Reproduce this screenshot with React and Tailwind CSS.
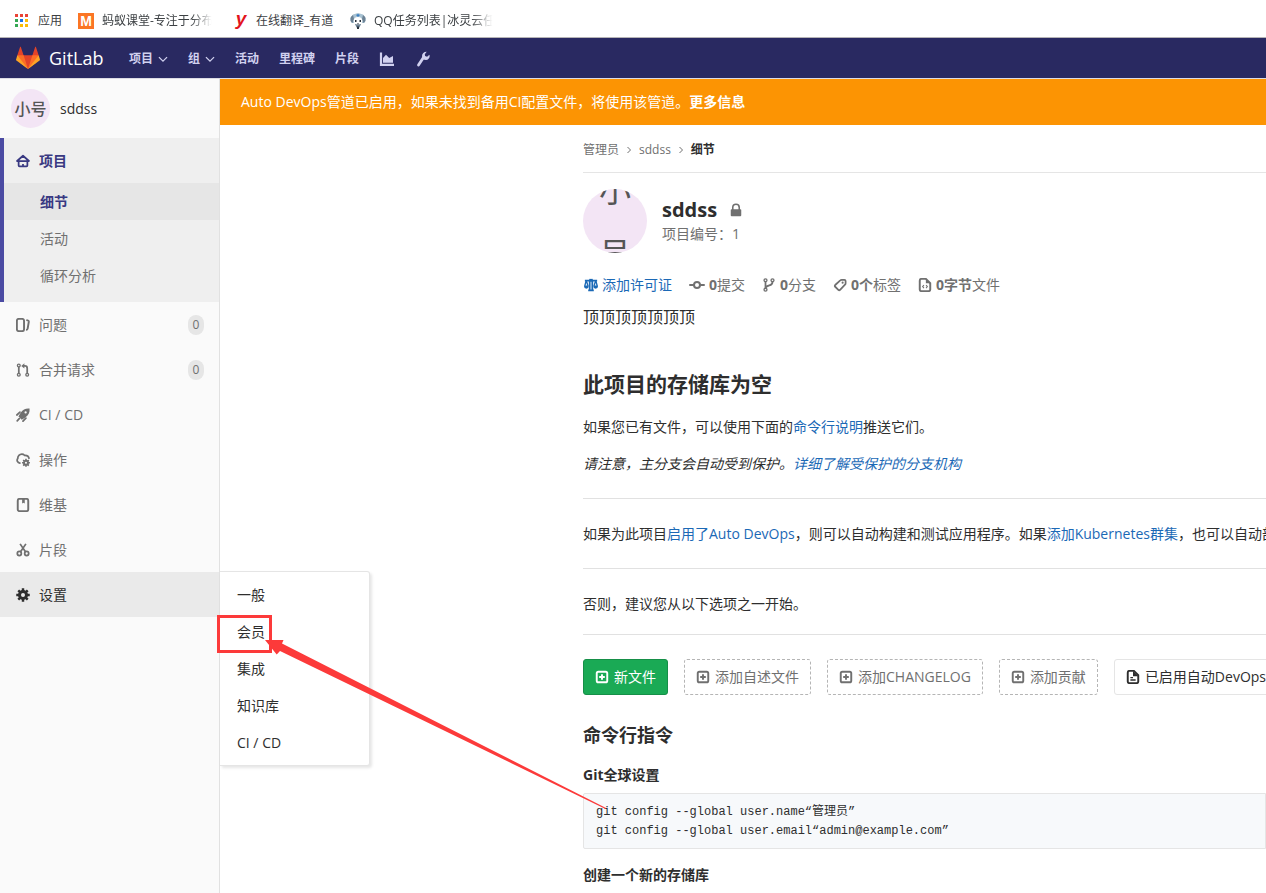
import React from "react";

function Icon({ size = "size-3.5", children, className = "" }) {
  return (
    <svg viewBox="0 0 16 16" aria-hidden="true" className={`${size} shrink-0 ${className}`} fill="none" stroke="currentColor" strokeWidth="2">
      {children}
    </svg>
  );
}

const HomeIcon = () => (
  <Icon>
    <path d="M1.2 8 8 2l6.800 6z" strokeLinejoin="round" />
    <path d="M3 8v5.200q0 1 1 1h8q1 0 1-1V8M8 14v-2.600" />
  </Icon>
);

const IssuesIcon = () => (
  <Icon>
    <rect x="1" y="1" width="8.200" height="14" rx="2.200" strokeWidth="2.200" />
    <path d="M11.800 2.400l1.600.3q1.400.3 1.200 1.800l-1.300 7.600q-.3 1.600-1.900 1.500" strokeWidth="2.200" />
  </Icon>
);

const MergeIcon = () => (
  <Icon>
    <circle cx="3.200" cy="2.800" r="1.600" strokeWidth="1.500" />
    <circle cx="3.200" cy="13.400" r="1.600" strokeWidth="1.500" />
    <circle cx="12.800" cy="13.400" r="1.600" strokeWidth="1.500" />
    <path d="M3.200 4.500v7.200M12.800 11.700V6q0-2.600-2.600-2.600H8.600" />
    <path d="M9.600.4v6L6 3.400z" fill="currentColor" stroke="none" />
  </Icon>
);

const RocketIcon = () => (
  <Icon>
    <path
      d="M15.500.6C11 .2 8 1.600 5.500 5.200l-.9 1.400L2.800 9.700l3.800 3.800 3.200-2.100 1.100-.8C14.500 8 15.900 5 15.500.6zM11 6.300a1.300 1.300 0 1 1 0-2.600 1.300 1.300 0 0 1 0 2.600z"
      fill="currentColor"
      stroke="none"
      fillRule="evenodd"
    />
    <path d="M1 8 4.500 4.800M3.700 12.200 1.400 14.600M8 15l3.300-3.400" strokeLinecap="round" />
  </Icon>
);

const CloudGearIcon = () => (
  <Icon>
    <path d="M5.200 11.600h-.8A3.400 3.400 0 0 1 2 6.200C2 3.600 4 1.300 6.700 1.300q1.800 0 3 1.300 4.800-.3 5.300 4" />
    <path d="M11.400 6.700v9M6.900 11.200h9M8.200 8l6.400 6.400M14.600 8l-6.400 6.400" strokeWidth="1.800" />
    <circle cx="11.400" cy="11.200" r="2.300" strokeWidth="2.200" />
    <circle cx="11.400" cy="11.200" r="1.200" fill="#fafafa" stroke="none" />
  </Icon>
);

const BookIcon = () => (
  <Icon>
    <rect x="2" y="1" width="12" height="14" rx="2" strokeWidth="2.200" />
    <path d="M7 1v5.400l1.500-1 1.500 1V1z" fill="currentColor" stroke="none" />
  </Icon>
);

const ScissorsIcon = () => (
  <Icon>
    <circle cx="3.800" cy="12" r="2.300" />
    <circle cx="12.200" cy="12" r="2.300" />
    <path d="M4.700 1 11 10.400M11.300 1 5 10.400" />
  </Icon>
);

const GearIcon = () => (
  <Icon>
    <path d="M8 .3v15.400M.3 8h15.400M2.600 2.600l10.800 10.800M13.400 2.600 2.600 13.400" strokeWidth="2.800" />
    <circle cx="8" cy="8" r="4" strokeWidth="3.400" />
    <circle cx="8" cy="8" r="2.300" fill="#eaeaea" stroke="none" />
  </Icon>
);

const ChevronDown = () => (
  <Icon size="size-2.5">
    <path d="M1.500 5 8 11.500 14.500 5" />
  </Icon>
);

const ChartIcon = () => (
  <Icon size="size-4">
    <path d="M2 1.500v12.300h13" strokeWidth="2.200" />
    <path d="M4 11.700V7l3-3.300 3.200 3.300 3.800-2v6.700z" fill="currentColor" stroke="none" />
  </Icon>
);

const WrenchIcon = () => (
  <Icon size="size-4">
    <path d="M3.500 14 8.300 6.800" strokeWidth="2.800" strokeLinecap="round" />
    <path d="M11.700.8Q7.200 1 7 4.900q.2 4 4 4.100 3.300-.3 3.700-4l-.3-1.300-2.300 2.100-2-.8-.3-1.800z" fill="currentColor" stroke="none" />
  </Icon>
);

const CommitIcon = () => (
  <Icon size="size-4">
    <circle cx="8" cy="8" r="3" />
    <path d="M1 8h4M11 8h4" strokeLinecap="round" />
  </Icon>
);

const BranchIcon = () => (
  <Icon>
    <circle cx="4" cy="2.600" r="1.700" strokeWidth="1.500" />
    <circle cx="4" cy="13.400" r="1.700" strokeWidth="1.500" />
    <circle cx="12" cy="2.600" r="1.700" strokeWidth="1.500" />
    <path d="M4 4.500v7.200M12 4.500q0 3-3.600 3.900Q4.600 9.300 4 11.600" />
  </Icon>
);

const LabelIcon = () => (
  <Icon>
    <path d="M8.300 2.700q.7-.7 1.700-.7h3q1.400 0 1.400 1.400V6q0 1-.7 1.700l-5.600 5.800q-1 1-2 0L2.500 10q-1-1 0-2z" />
    <circle cx="11" cy="5.300" r="1.200" fill="currentColor" stroke="none" />
  </Icon>
);

const DocCodeIcon = () => (
  <Icon>
    <path d="M4 1h5l5 5v7q0 2-2 2H4q-2 0-2-2V3q0-2 2-2z" strokeWidth="2.200" />
    <path d="M9 1v5h5z" fill="currentColor" stroke="none" />
    <path d="M6.800 8 5.300 9.800l1.500 1.800M9.200 8l1.500 1.800-1.500 1.800" strokeWidth="1.200" />
  </Icon>
);

const DocTextIcon = () => (
  <Icon>
    <path d="M4 1h5l5 5v7q0 2-2 2H4q-2 0-2-2V3q0-2 2-2z" strokeWidth="2.200" />
    <path d="M8 1v6h6z" fill="currentColor" stroke="none" />
    <path d="M5 8.700h3M5 11.500h6" strokeWidth="1.600" />
  </Icon>
);

const PlusSquare = () => (
  <Icon>
    <rect x="2" y="2" width="12" height="12" rx="1.800" strokeWidth="2.200" />
    <path d="M8 4.800v6.400M4.800 8h6.400" strokeWidth="2.200" />
  </Icon>
);

const ScaleIcon = () => (
  <Icon>
    <path d="M1 3h14M6.500 3v11M9.500 3v11M4.800 14.200h6.400" />
    <path d="M6 1h4v3H6z" fill="currentColor" stroke="none" />
    <path d="M0 8.500h5.400v1q0 2.700-2.700 2.700T0 9.500zM10.600 8.500H16v1q0 2.700-2.700 2.700t-2.700-2.700z" fill="currentColor" stroke="none" />
    <path d="M2.500 3 .9 9M2.700 3l1.800 6M13.300 3l-1.800 6M13.500 3l1.600 6" strokeWidth="1.600" />
  </Icon>
);

const LockIcon = () => (
  <Icon className="text-[#707070]">
    <rect x="2" y="7" width="12" height="8" rx="1" fill="currentColor" stroke="none" />
    <path d="M4.300 8V5.200q0-3.700 3.700-3.700t3.700 3.700V8" strokeWidth="1.800" />
  </Icon>
);

const Tanuki = () => (
  <svg viewBox="0 0 36 36" className="size-6 shrink-0" aria-hidden="true">
    <path fill="#e24329" d="M2 14l9.380 9v-9l-4-12.280c-.205-.632-1.176-.632-1.380 0z" />
    <path fill="#e24329" d="M34 14l-9.380 9v-9l4-12.280c.205-.632 1.176-.632 1.380 0z" />
    <path fill="#e24329" d="M18 34.380 3 14h30z" />
    <path fill="#fc6d26" d="M18 34.380 11.380 14H2l4 11z" />
    <path fill="#fc6d26" d="M18 34.380 24.620 14H34l-4 11z" />
    <path fill="#fca326" d="M2 14L.1 20.160c-.18.565 0 1.200.5 1.560l17.420 12.660z" />
    <path fill="#fca326" d="M34 14l1.900 6.160c.18.565 0 1.200-.5 1.560L18 34.380z" />
  </svg>
);

const AppsIcon = () => (
  <svg viewBox="0 0 13 13" className="size-[13px]" aria-hidden="true">
    <path fill="#ea4335" d="M0 0h3v3H0zM5 0h3v3H5zM10 0h3v3h-3z" />
    <path fill="#34a853" d="M0 5h3v3H0zM0 10h3v3H0z" />
    <path fill="#1a73e8" d="M5 5h3v3H5z" />
    <path fill="#fbbc04" d="M10 5h3v3h-3zM5 10h3v3H5zM10 10h3v3h-3z" />
  </svg>
);

const RobotIcon = () => (
  <svg viewBox="0 0 16 16" className="size-4" aria-hidden="true">
    <path fill="#a9c3d3" d="M3 1.500 8 0l5 1.500 3 4-1.500 4.500h-13L0 5.500z" />
    <path fill="#6d8294" d="M.8 4 3 2l1 4-1.500 4L.5 8zM15.200 4 13 2l-1 4 1.500 4 2-2zM5 11h6l-1.500 3.500h-3z" />
    <ellipse cx="8" cy="7.800" rx="4.300" ry="3.800" fill="#fff" />
    <path fill="#27313c" d="M5 7h1.500v2H5zM9.500 7H11v2H9.500zM7 10.500h2v.8H7zM7 13.500h2V16H7z" />
    <path fill="#3d7fc0" d="M6 2l2-1 2 1-2 2z" />
  </svg>
);

function Bookmarks() {
  const fade = "whitespace-nowrap [mask-image:linear-gradient(to_right,#000_80%,transparent_98%)]";
  return (
    <nav aria-label="书签" className="flex h-[38px] items-center border-b border-[#b6b4b6] bg-white pl-[15px] pt-1 text-[12px] leading-4 text-[#3c4043]">
      <a href="#apps" className="flex w-[63px] items-center gap-2.5">
        <AppsIcon />
        应用
      </a>
      <a href="#mayi" className="flex w-[155px] items-center gap-2">
        <span className="flex size-4 shrink-0 items-center justify-center bg-[#fb7524] font-['Liberation_Sans',sans-serif] text-[14px] font-bold text-white">M</span>
        <span className={fade}>蚂蚁课堂-专注于分布</span>
      </a>
      <a href="#youdao" className="flex w-[117px] items-center gap-[7px]">
        <span className="flex h-5 w-4 shrink-0 items-start justify-center font-['Liberation_Sans',sans-serif] text-[19px] font-black italic leading-4 text-[#e3141c]">y</span>
        在线翻译_有道
      </a>
      <a href="#qq" className="flex items-center gap-2">
        <RobotIcon />
        <span className={fade}>QQ任务列表|冰灵云任</span>
      </a>
    </nav>
  );
}

function Header() {
  return (
    <header className="flex h-[41px] items-center border-b border-[#dcdce4] bg-[#292961] pl-4 text-[#d1d1f0]">
      <a href="#home" className="flex w-[113px] items-center gap-[9px] text-[18px] leading-6 text-white">
        <Tanuki />
        GitLab
      </a>
      <nav aria-label="主导航" className="flex items-center gap-5 pt-0.5 text-[12px] font-bold leading-4">
        <button type="button" className="flex items-center gap-[5px]">项目<ChevronDown /></button>
        <button type="button" className="flex items-center gap-[5px]">组<ChevronDown /></button>
        <a href="#activity">活动</a>
        <a href="#milestones">里程碑</a>
        <a href="#snippets">片段</a>
        <a href="#stats" aria-label="统计"><ChartIcon /></a>
        <a href="#admin" aria-label="管理"><WrenchIcon /></a>
      </nav>
    </header>
  );
}

const sideItems = [
  { name: "问题", icon: IssuesIcon, count: 0 },
  { name: "合并请求", icon: MergeIcon, count: 0 },
  { name: "CI / CD", icon: RocketIcon },
  { name: "操作", icon: CloudGearIcon },
  { name: "维基", icon: BookIcon },
  { name: "片段", icon: ScissorsIcon },
];

function Sidebar() {
  return (
    <aside className="w-[220px] shrink-0 border-r border-[#e1e1e1] bg-[#fafafa] text-[14px] leading-5 text-[#707070]">
      <a href="#project" className="flex h-[59px] items-center gap-2.5 pl-[11px] text-[#2e2e2e]">
        <span className="flex size-[39px] items-center justify-center rounded-full bg-[#f3e5f5] text-[16px] font-medium text-[#555]">小号</span>
        <span className="font-medium">sddss</span>
      </a>
      <div className="border-l-4 border-[#4b4ba3] bg-[#efefef] pb-2">
        <a href="#overview" className="flex h-[45px] items-center gap-[9px] pl-3 font-bold text-[#393982]">
          <HomeIcon />
          项目
        </a>
        <a href="#details" className="flex h-[37px] items-center bg-[#e6e6e6] pl-9 font-bold text-[#393982]">细节</a>
        <a href="#events" className="flex h-[37px] items-center pl-9">活动</a>
        <a href="#cycle" className="flex h-[37px] items-center pl-9">循环分析</a>
      </div>
      {sideItems.map(({ name, icon: Glyph, count }) => (
        <a key={name} href={`#${name}`} className="flex h-[45px] items-center gap-[9px] pl-4 pr-[15px]">
          <Glyph />
          {name}
          {count !== undefined && (
            <span className="ml-auto flex h-5 w-4 items-center justify-center rounded-full bg-[#e6e6e6] text-[12px]">{count}</span>
          )}
        </a>
      ))}
      <div className="relative">
        <a href="#settings" className="flex h-[45px] items-center gap-[9px] bg-[#eaeaea] pl-4 text-[#2e2e2e]">
          <GearIcon />
          设置
        </a>
        <ul className="absolute left-[220px] top-[-1px] w-[150px] rounded-r-[3px] border border-l-0 border-[#e5e5e5] bg-white py-1 text-[#2e2e2e] shadow-[2px_2px_3px_rgba(0,0,0,0.1)]">
          {["一般", "会员", "集成", "知识库", "CI / CD"].map((name) => (
            <li key={name}>
              <a href={`#${name}`} className="flex h-[37px] items-center pl-[17px]">{name}</a>
            </li>
          ))}
        </ul>
        <div className="absolute left-[217px] top-[43px] h-[38px] w-[55px] border-[3px] border-[#fc3a3a]" />
        <svg aria-hidden="true" viewBox="265 640 344 170" className="pointer-events-none absolute left-[265px] top-[68px] h-[170px] w-[344px]">
          <path fill="#fc3a3a" d="M265 640H283.500L282 643.500 606 808 605.500 808.900 280 651 276.700 654.500z" />
        </svg>
      </div>
    </aside>
  );
}

const Crumb = () => (
  <Icon size="size-2">
    <path d="M5 2l6 6-6 6" />
  </Icon>
);

function Stat({ icon, value, label }) {
  return (
    <li className="flex items-center gap-1">
      {icon}
      <span><b>{value}</b>{label}</span>
    </li>
  );
}

function AddButton({ children }) {
  return (
    <button type="button" className="flex h-9 shrink-0 items-center gap-[5px] rounded-[3px] border border-dashed border-[#b5b5b5] px-[11px] text-[#707070]">
      <PlusSquare />
      {children}
    </button>
  );
}

function Content() {
  const link = "text-[#1b69b6]";
  return (
    <div className="pl-[363px] text-[14px] leading-5 text-[#2e2e2e]">
      <nav aria-label="面包屑" className="flex h-12 items-center gap-1.5 border-b border-[#e5e5e5] pt-0.5 text-[12px] text-[#707070]">
        <a href="#admin-user">管理员</a>
        <Crumb />
        <a href="#sddss">sddss</a>
        <Crumb />
        <a href="#details" className="font-bold text-[#2e2e2e]">细节</a>
      </nav>
      <div className="flex gap-[15px] pt-4">
        <div className="flex size-16 flex-col items-center justify-center overflow-hidden rounded-full bg-[#f3e5f5] pt-0.5 text-[32px] leading-[64px] text-[#555]">
          <span>小</span>
          <span>号</span>
        </div>
        <div className="pt-[9px]">
          <h1 className="flex items-center gap-3 text-[20px] font-bold leading-6">sddss <LockIcon /></h1>
          <p className="pt-0.5 text-[#707070]">项目编号：1</p>
        </div>
      </div>
      <ul className="flex gap-[17px] pt-[22px] text-[#707070]">
        <li>
          <a href="#license" className={`flex items-center gap-1 pl-px ${link}`}><ScaleIcon />添加许可证</a>
        </li>
        <Stat icon={<CommitIcon />} value="0" label="提交" />
        <Stat icon={<BranchIcon />} value="0" label="分支" />
        <Stat icon={<LabelIcon />} value="0个" label="标签" />
        <Stat icon={<DocCodeIcon />} value="0字节" label="文件" />
      </ul>
      <p className="pt-3 text-[16px]">顶顶顶顶顶顶顶</p>
      <h2 className="pt-[43px] text-[21px] font-bold leading-7">此项目的存储库为空</h2>
      <p className="pt-[19px]">如果您已有文件，可以使用下面的<a href="#cli" className={link}>命令行说明</a>推送它们。</p>
      <p className="pt-[17px] italic">请注意，主分支会自动受到保护。<a href="#protected" className={link}>详细了解受保护的分支机构</a></p>
      <hr className="mt-6 border-[#e1e1e1]" />
      <p className="whitespace-nowrap pb-6 pt-[25px]">
        如果为此项目<a href="#devops" className={link}>启用了Auto DevOps</a>，则可以自动构建和测试应用程序。如果<a href="#k8s" className={link}>添加Kubernetes群集</a>，也可以自动部署。
      </p>
      <hr className="border-[#e1e1e1]" />
      <p className="pb-5 pt-[25px]">否则，建议您从以下选项之一开始。</p>
      <hr className="border-[#e1e1e1]" />
      <div className="flex gap-4 pt-6">
        <button type="button" className="flex h-9 shrink-0 items-center gap-[5px] rounded-[3px] border border-[#168f48] bg-[#1aaa55] px-[11px] text-white">
          <PlusSquare />
          新文件
        </button>
        <AddButton>添加自述文件</AddButton>
        <AddButton>添加CHANGELOG</AddButton>
        <AddButton>添加贡献</AddButton>
        <button type="button" className="flex h-9 shrink-0 items-center gap-[5px] rounded-[3px] border border-[#e5e5e5] px-[11px]">
          <DocTextIcon />
          已启用自动DevOps
        </button>
      </div>
      <h3 className="pt-7 text-[18px] font-bold leading-6">命令行指令</h3>
      <h4 className="pt-[18px] font-bold">Git全球设置</h4>
      <pre className="mt-2 rounded-l-[2px] border border-[#e5e5e5] bg-[#f7f9fb] px-3 pb-[7px] pt-[9px] font-['Liberation_Mono','Noto_Sans_CJK_SC',monospace] text-[12px] leading-[19px]">
        {"git config --global user.name“管理员”\ngit config --global user.email“admin@example.com”"}
      </pre>
      <h4 className="pt-4 font-bold">创建一个新的存储库</h4>
    </div>
  );
}

export default function App() {
  return (
    <div lang="zh-CN" className="flex min-h-screen flex-col overflow-hidden bg-white font-['Open_Sans','Noto_Sans_CJK_SC',sans-serif]">
      <Bookmarks />
      <Header />
      <div className="flex grow">
        <Sidebar />
        <main className="min-w-0 grow">
          <div className="flex h-[46px] items-center bg-[#fc9403] pl-[21px] text-[14px] leading-5 text-white">
            <p>Auto DevOps管道已启用，如果未找到备用CI配置文件，将使用该管道。<a href="#more" className="font-bold">更多信息</a></p>
          </div>
          <Content />
        </main>
      </div>
    </div>
  );
}
